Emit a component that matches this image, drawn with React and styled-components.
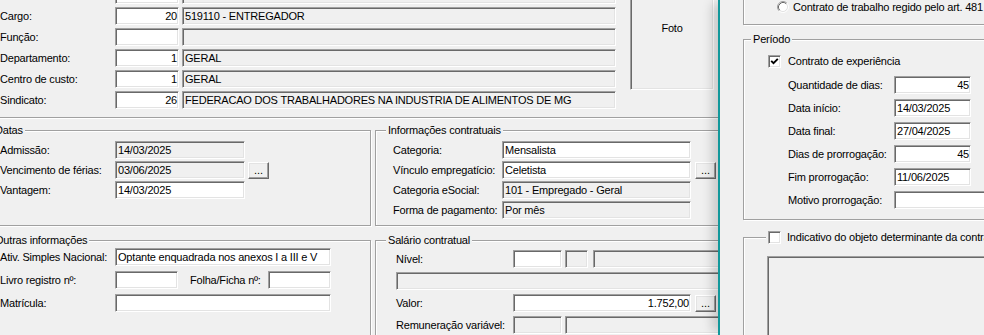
import React from 'react';
import styled, { createGlobalStyle } from 'styled-components';

const GlobalStyle = createGlobalStyle`
  html, body { margin: 0; padding: 0; background: #f0f0f0; }
  #root { width: 984px; height: 335px; overflow: hidden; }
`;

const Screen = styled.div`
  display: flex;
  width: 984px;
  height: 335px;
  overflow: hidden;
  background: #f0f0f0;
  color: #000;
  font-family: "Liberation Sans", Arial, sans-serif;
  font-size: 11px;
  line-height: 13px;
  letter-spacing: -0.2px;
`;

const LeftWindow = styled.div`
  flex: none;
  width: 718px;
  height: 335px;
  overflow: hidden;
`;

const Canvas = styled.div`
  margin-left: -18px;
  width: 790px;
`;

const TopSection = styled.div`
  display: flex;
  align-items: flex-start;
  margin-top: -14px;
  padding: 0 0 8px 18px;
  border-bottom: 1px solid #a0a0a0;
  box-shadow: 0 1px 0 #fff;
`;

const GroupRow = styled.div`
  display: flex;
  gap: 4px;
  margin-top: ${p => p.$mt ?? 0}px;
`;

const Stack = styled.div`
  display: flex;
  flex-direction: column;
  gap: ${p => p.$gap ?? 3}px;
  margin-top: ${p => p.$mt ?? 0}px;
  padding-left: ${p => p.$pl ?? 0}px;
`;

const Row = styled.div`
  display: flex;
  align-items: center;
  height: ${p => p.$h ?? 18}px;
`;

const Label = styled.span`
  flex: none;
  width: ${p => (p.$w ? `${p.$w}px` : 'auto')};
  margin-left: ${p => p.$ml ?? 0}px;
  white-space: nowrap;
`;

const Field = styled.div`
  box-sizing: border-box;
  flex: none;
  display: flex;
  align-items: center;
  justify-content: ${p => (p.$right ? 'flex-end' : 'flex-start')};
  width: ${p => p.$w}px;
  height: ${p => p.$h ?? 18}px;
  margin-left: ${p => p.$ml ?? 0}px;
  padding: 0 ${p => (p.$right ? 1 : 0)}px 0 2px;
  background: ${p => (p.$ro ? '#f0f0f0' : '#ffffff')};
  border-style: solid;
  border-width: 1px;
  border-color: #a0a0a0 #ffffff #ffffff #a0a0a0;
  box-shadow: inset 1px 1px 0 #696969, inset -1px -1px 0 #e3e3e3;
  white-space: nowrap;
  overflow: hidden;
`;

const DotsButton = styled.button`
  box-sizing: border-box;
  flex: none;
  display: flex;
  align-items: center;
  justify-content: center;
  width: 21px;
  height: 17px;
  margin: 0 0 0 ${p => p.$ml ?? 4}px;
  padding: 0;
  border-style: solid;
  border-width: 1px;
  border-color: #ffffff #696969 #696969 #ffffff;
  box-shadow: inset -1px -1px 0 #a0a0a0, inset 1px 1px 0 #e3e3e3;
  background: #f0f0f0;
  color: #000;
  font: inherit;
  letter-spacing: 0;
`;

const PhotoFrame = styled.div`
  box-sizing: border-box;
  flex: none;
  display: flex;
  justify-content: center;
  width: 84px;
  height: 104px;
  margin-left: 14px;
  padding-top: 35px;
  border-style: solid;
  border-width: 1px;
  border-color: #a0a0a0 #ffffff #ffffff #a0a0a0;
  box-shadow: inset 1px 1px 0 #696969, inset -1px -1px 0 #e3e3e3;
`;

const MemoBox = styled.div`
  box-sizing: border-box;
  width: 300px;
  height: 110px;
  background: #f0f0f0;
  border-style: solid;
  border-width: 1px;
  border-color: #a0a0a0 #ffffff #ffffff #a0a0a0;
  box-shadow: inset 1px 1px 0 #696969, inset -1px -1px 0 #e3e3e3;
`;

const Group = styled.div`
  position: relative;
  box-sizing: border-box;
  flex: none;
  width: ${p => p.$w}px;
  height: ${p => p.$h}px;
  margin-top: ${p => p.$mt ?? 0}px;
  padding: ${p => p.$pt ?? 0}px 0 0 ${p => p.$pl ?? 0}px;
  border: 1px solid #a0a0a0;
  box-shadow: inset 1px 1px 0 #ffffff, 1px 1px 0 #ffffff;
`;

const Legend = styled.div`
  position: absolute;
  top: -7px;
  left: ${p => p.$left ?? 10}px;
  display: flex;
  align-items: center;
  gap: 6px;
  height: 13px;
  padding: 0 2px;
  background: #f0f0f0;
  white-space: nowrap;
`;

const RightWindow = styled.div`
  position: relative;
  z-index: 1;
  flex: 1;
  min-width: 0;
  height: 335px;
  box-sizing: border-box;
  padding-left: 23px;
  border-left: 2px solid #12989b;
  background: #f0f0f0;
  box-shadow: -9px 0 10px -3px rgba(0, 0, 0, 0.16);
  overflow: hidden;
`;

const CheckBoxBox = styled.span`
  box-sizing: border-box;
  flex: none;
  display: inline-flex;
  align-items: center;
  justify-content: center;
  width: 13px;
  height: 13px;
  background: #fff;
  border-style: solid;
  border-width: 1px;
  border-color: #a0a0a0 #ffffff #ffffff #a0a0a0;
  box-shadow: inset 1px 1px 0 #696969, inset -1px -1px 0 #e3e3e3;
`;

const CheckBox = ({ checked }) => (
  <CheckBoxBox>
    {checked && (
      <svg width="9" height="9" viewBox="0 0 9 9">
        <path d="M1.2 3.8 L3.5 6.1 L7.8 1.8" stroke="#000" strokeWidth="1.9" fill="none" />
      </svg>
    )}
  </CheckBoxBox>
);

const Radio = () => (
  <svg width="12" height="12" viewBox="0 0 12 12" style={{ flex: 'none' }}>
    <circle cx="6" cy="6" r="4.5" fill="#fff" />
    <path d="M2.11 9.89 A5.5 5.5 0 0 1 9.89 2.11" stroke="#a0a0a0" fill="none" />
    <path d="M9.89 2.11 A5.5 5.5 0 0 1 2.11 9.89" stroke="#ffffff" fill="none" />
    <path d="M2.82 9.18 A4.5 4.5 0 0 1 9.18 2.82" stroke="#696969" fill="none" />
    <path d="M9.18 2.82 A4.5 4.5 0 0 1 2.82 9.18" stroke="#e3e3e3" fill="none" />
  </svg>
);

const topRows = [
  { label: '', code: '', desc: '' },
  { label: 'Cargo:', code: '20', desc: '519110 - ENTREGADOR' },
  { label: 'Função:', code: '', desc: '' },
  { label: 'Departamento:', code: '1', desc: 'GERAL' },
  { label: 'Centro de custo:', code: '1', desc: 'GERAL' },
  { label: 'Sindicato:', code: '26', desc: 'FEDERACAO DOS TRABALHADORES NA INDUSTRIA DE ALIMENTOS DE MG' },
];

const periodRows = [
  { label: 'Quantidade de dias:', value: '45', right: true },
  { label: 'Data início:', value: '14/03/2025' },
  { label: 'Data final:', value: '27/04/2025' },
  { label: 'Dias de prorrogação:', value: '45', right: true },
  { label: 'Fim prorrogação:', value: '11/06/2025' },
  { label: 'Motivo prorrogação:', value: '', w: 120 },
];

export default function App() {
  return (
    <Screen>
      <GlobalStyle />
      <LeftWindow>
        <Canvas>
          <TopSection>
            <Stack $gap={3}>
              {topRows.map((r, i) => (
                <Row key={i}>
                  <Label $w={115}>{r.label}</Label>
                  <Field $w={64} $right>{r.code}</Field>
                  <Field $w={434} $ro $ml={3}>{r.desc}</Field>
                </Row>
              ))}
            </Stack>
            <PhotoFrame>Foto</PhotoFrame>
          </TopSection>

          <GroupRow $mt={12}>
            <Group $w={389} $h={96} $pt={10} $pl={17}>
              <Legend>Datas</Legend>
              <Stack $gap={2}>
                <Row>
                  <Label $w={115}>Admissão:</Label>
                  <Field $w={130} $ro>14/03/2025</Field>
                </Row>
                <Row>
                  <Label $w={115}>Vencimento de férias:</Label>
                  <Field $w={130} $ro>03/06/2025</Field>
                  <DotsButton $ml={3}>...</DotsButton>
                </Row>
                <Row>
                  <Label $w={115}>Vantagem:</Label>
                  <Field $w={130}>14/03/2025</Field>
                </Row>
              </Stack>
            </Group>
            <Group $w={380} $h={96} $pt={10} $pl={17}>
              <Legend>Informações contratuais</Legend>
              <Stack $gap={2}>
                <Row>
                  <Label $w={109}>Categoria:</Label>
                  <Field $w={189}>Mensalista</Field>
                </Row>
                <Row>
                  <Label $w={109}>Vínculo empregatício:</Label>
                  <Field $w={189}>Celetista</Field>
                  <DotsButton $ml={4}>...</DotsButton>
                </Row>
                <Row>
                  <Label $w={109}>Categoria eSocial:</Label>
                  <Field $w={189} $ro>101 - Empregado - Geral</Field>
                </Row>
                <Row>
                  <Label $w={109}>Forma de pagamento:</Label>
                  <Field $w={189} $ro>Por mês</Field>
                </Row>
              </Stack>
            </Group>
          </GroupRow>

          <GroupRow $mt={14}>
            <Group $w={389} $h={120} $pt={7} $pl={17}>
              <Legend>Outras informações</Legend>
              <Stack $gap={5}>
                <Row>
                  <Label $w={115}>Ativ. Simples Nacional:</Label>
                  <Field $w={216}>Optante enquadrada nos anexos I a III e V</Field>
                </Row>
                <Row>
                  <Label $w={115}>Livro registro nº:</Label>
                  <Field $w={63} />
                  <Label $w={78} $ml={12}>Folha/Ficha nº:</Label>
                  <Field $w={63} />
                </Row>
                <Row>
                  <Label $w={115}>Matrícula:</Label>
                  <Field $w={216} />
                </Row>
              </Stack>
            </Group>
            <Group $w={380} $h={120} $pt={9} $pl={20}>
              <Legend>Salário contratual</Legend>
              <Stack $gap={4}>
                <Row>
                  <Label $w={117}>Nível:</Label>
                  <Field $w={49} />
                  <Field $w={23} $ro $ml={3} />
                  <Field $w={150} $ro $ml={5} />
                </Row>
                <Row>
                  <Field $w={330} $ro />
                </Row>
                <Row>
                  <Label $w={117}>Valor:</Label>
                  <Field $w={178} $right>1.752,00</Field>
                  <DotsButton $ml={4}>...</DotsButton>
                </Row>
                <Row>
                  <Label $w={117}>Remuneração variável:</Label>
                  <Field $w={49} $ro />
                  <Field $w={160} $ro $ml={3} />
                </Row>
              </Stack>
            </Group>
          </GroupRow>
        </Canvas>
      </LeftWindow>

      <RightWindow>
        <Group $w={300} $h={45} $mt={-20} $pt={20} $pl={33}>
          <Row $h={12}>
            <Radio />
            <Label $ml={4}>Contrato de trabalho regido pelo art. 481</Label>
          </Row>
        </Group>

        <Group $w={300} $h={181} $mt={14} $pt={12} $pl={24}>
          <Legend $left={7}>Período</Legend>
          <Row>
            <CheckBox checked />
            <Label $ml={7}>Contrato de experiência</Label>
          </Row>
          <Stack $mt={6} $gap={5} $pl={20}>
            {periodRows.map(r => (
              <Row key={r.label}>
                <Label $w={106}>{r.label}</Label>
                <Field $w={r.w ?? 77} $right={r.right}>{r.value}</Field>
              </Row>
            ))}
          </Stack>
        </Group>

        <Group $w={300} $h={150} $mt={17} $pt={18} $pl={23}>
          <Legend $left={22}>
            <CheckBox />
            <span>Indicativo do objeto determinante da contratação por prazo determinado</span>
          </Legend>
          <MemoBox />
        </Group>
      </RightWindow>
    </Screen>
  );
}
